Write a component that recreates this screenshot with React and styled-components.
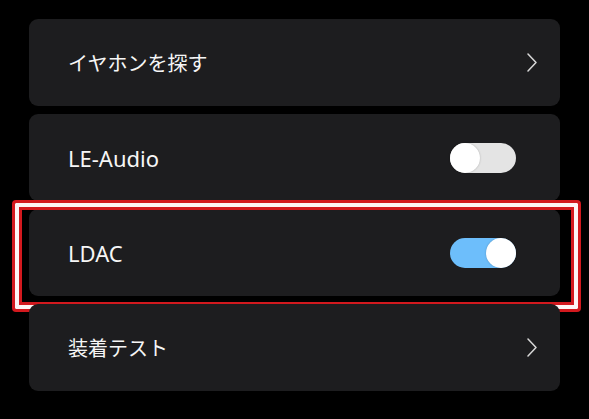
import React from "react";
import styled, { createGlobalStyle } from "styled-components";

const Global = createGlobalStyle`
  html, body { margin: 0; padding: 0; background: #000; }
  body { font-family: "Noto Sans", "Noto Sans CJK JP", sans-serif; }
`;

const Page = styled.div`
  width: 589px;
  height: 419px;
  box-sizing: border-box;
  padding: 19px 29px 0;
  display: flex;
  flex-direction: column;
  gap: 8px;
  background: #000;
`;

const Card = styled.div`
  position: relative;
  height: 87px;
  box-sizing: border-box;
  background: #1d1d1f;
  border-radius: 9px;
  display: flex;
  align-items: center;
  justify-content: space-between;
  padding: 0 ${(p) => (p.$chevron ? 23 : 44)}px 0 39px;
`;

const Label = styled.span`
  color: #f6f6f6;
  font-size: ${(p) => (p.$latin ? 22 : 20)}px;
  font-weight: 400;
  letter-spacing: 0;
`;

const Track = styled.div`
  width: 66px;
  height: 30px;
  border-radius: 15px;
  background: ${(p) => (p.$on ? "#6dbefb" : "#e4e4e4")};
  display: flex;
  justify-content: ${(p) => (p.$on ? "flex-end" : "flex-start")};
`;

const Knob = styled.div`
  width: 30px;
  height: 30px;
  border-radius: 50%;
  background: #fff;
  box-shadow: 0 0 2px rgba(0, 0, 0, 0.25);
`;

const Highlight = styled.div`
  position: absolute;
  left: -17px;
  right: -21px;
  top: -9px;
  bottom: -16px;
  border: 3px solid #d3191e;
  border-radius: 4px;
  box-shadow: inset 0 0 0 4px #fdf4f4, inset 0 0 0 7px #d3191e;
  pointer-events: none;
`;

const Chevron = () => (
  <svg width="10" height="19" viewBox="0 0 10 19" fill="none">
    <path d="M1 1 L9 9.5 L1 18" stroke="#d8d8d8" strokeWidth="1.5" strokeLinecap="round" strokeLinejoin="round" />
  </svg>
);

const Toggle = ({ on }) => (
  <Track $on={on}>
    <Knob />
  </Track>
);

export default function App() {
  return (
    <>
      <Global />
      <Page>
        <Card $chevron>
          <Label>イヤホンを探す</Label>
          <Chevron />
        </Card>
        <Card>
          <Label $latin>LE-Audio</Label>
          <Toggle on={false} />
        </Card>
        <Card>
          <Label $latin>LDAC</Label>
          <Toggle on />
          <Highlight />
        </Card>
        <Card $chevron>
          <Label>装着テスト</Label>
          <Chevron />
        </Card>
      </Page>
    </>
  );
}
